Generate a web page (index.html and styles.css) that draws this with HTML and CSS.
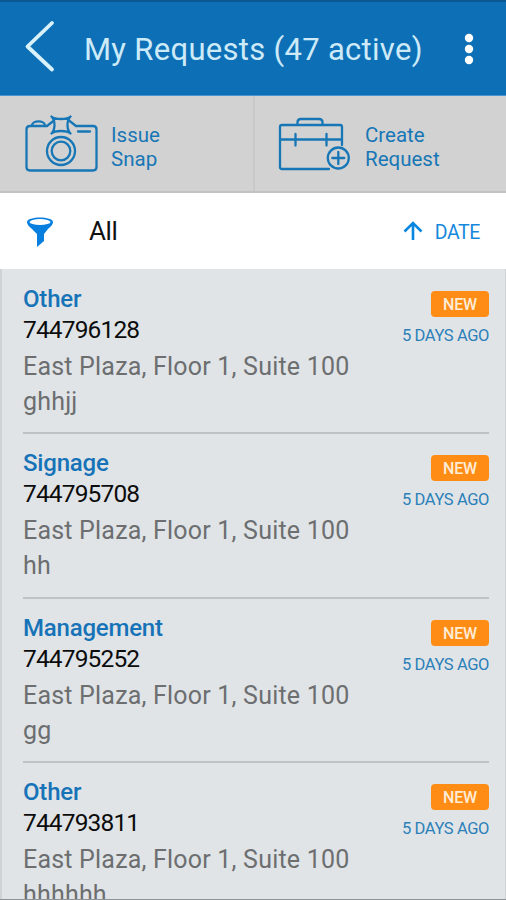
FILE: index.html
```
<!DOCTYPE html>
<html lang="en">
<head>
<meta charset="utf-8">
<title>My Requests</title>
<link rel="stylesheet" href="styles.css">
</head>
<body>
<div class="screen">
  <header class="bar">
    <svg class="back" width="34" height="54" viewBox="0 0 34 54"><path d="M30 4 5.500 27.500 30 50.500"/></svg>
    <h1>My Requests (47 active)</h1>
    <svg class="more" width="10" height="32" viewBox="0 0 10 32"><circle cx="5" cy="5" r="4.200"/><circle cx="5" cy="16" r="4.200"/><circle cx="5" cy="27" r="4.200"/></svg>
  </header>
  <nav class="actions">
    <a class="action">
      <svg width="76" height="60" viewBox="0 0 76 60">
        <path d="M31 5.500l-7 5.500H7q-3.500 0-3.500 3.500V52q0 3.500 3.500 3.500h63q3.500 0 3.500-3.500V14.500q0-3.500-3.500-3.500H53l-7-5.500"/>
        <path d="M9 10.500c0-5.500 13-5.500 13 0M55 16.500h12"/>
        <path d="M28.500 1.500q2.500 2.500 9.500 2.500t9.500-2.500q-3 3-3 8.500t3 8.500q-2.500-2.500-9.500-2.500t-9.500 2.500q3-3 3-8.500t-3-8.500Z"/>
        <circle cx="38" cy="36" r="14"/><circle cx="38" cy="36" r="9.300"/>
      </svg>
      <span class="label">Issue<br>Snap</span>
    </a>
    <a class="action create">
      <svg width="76" height="60" viewBox="0 0 76 60">
        <path d="M54 54H7q-2 0-2-2V12q0-2 2-2h58q2 0 2 2V30M5 24.500h62M20.500 19v11.500M51.500 19v11.500M22.500 9.500V7.500q0-3.500 3.500-3.500h18q3.500 0 3.500 3.500v2"/>
        <circle cx="63.300" cy="43" r="10.500"/><path d="M63.300 37v12M57.300 43h12"/>
      </svg>
      <span class="label">Create<br>Request</span>
    </a>
  </nav>
  <div class="filter">
    <svg class="funnel" width="28" height="32" viewBox="0 0 28 32"><path d="M1 6C1 0 27 0 27 6c0 3-3 5-5 7l-4 5v7l-7 6V18l-5-5C4 11 1 9 1 6Z"/><ellipse cx="14" cy="6" rx="10.500" ry="3"/></svg>
    <span class="all">All</span>
    <span class="sort"><svg width="20" height="20" viewBox="0 0 20 20"><path d="M10 19V2M1.500 10.500l8.500-8.500 8.500 8.500"/></svg><span class="date">DATE</span></span>
  </div>
  <main class="list">
    <article class="row">
      <div class="info"><h2>Other</h2><p class="num">744796128</p><p class="place">East Plaza, Floor 1, Suite 100</p><p class="place">ghhjj</p></div>
      <div class="meta"><span class="badge">NEW</span><span class="age">5 DAYS AGO</span></div>
    </article>
    <article class="row">
      <div class="info"><h2>Signage</h2><p class="num">744795708</p><p class="place">East Plaza, Floor 1, Suite 100</p><p class="place">hh</p></div>
      <div class="meta"><span class="badge">NEW</span><span class="age">5 DAYS AGO</span></div>
    </article>
    <article class="row">
      <div class="info"><h2>Management</h2><p class="num">744795252</p><p class="place">East Plaza, Floor 1, Suite 100</p><p class="place">gg</p></div>
      <div class="meta"><span class="badge">NEW</span><span class="age">5 DAYS AGO</span></div>
    </article>
    <article class="row">
      <div class="info"><h2>Other</h2><p class="num">744793811</p><p class="place">East Plaza, Floor 1, Suite 100</p><p class="place">hhhhhh</p></div>
      <div class="meta"><span class="badge">NEW</span><span class="age">5 DAYS AGO</span></div>
    </article>
  </main>
</div>
</body>
</html>
```
FILE: styles.css
```
* { box-sizing: border-box; }
body { margin: 0; font-family: Roboto, "Liberation Sans", sans-serif; }
h1, h2, p { margin: 0; font-weight: 400; white-space: nowrap; }
svg { flex: none; fill: none; stroke-linecap: round; stroke-linejoin: round; }
.screen { width: 506px; height: 900px; overflow: hidden; display: flex; flex-direction: column; border-bottom: 1px solid #8d9396; }
.bar { flex: none; height: 96px; display: flex; align-items: center; padding: 0 32px 0 22px; background: #0d70b6; border-top: 2px solid #0a5791; border-bottom: 1px solid #4a95d0; }
.back { stroke: #d9f1fa; stroke-width: 3.8; margin-top: -5px; }
.more { fill: #fff; margin-left: auto; margin-top: 1px; }
h1 { font-size: 31px; line-height: 40px; letter-spacing: .3px; color: #cdeaf8; margin-left: 28px; margin-top: 2px; }
.actions { flex: none; height: 97px; display: grid; grid-template-columns: 255px 251px; background: #d2d2d2; border-bottom: 2px solid #c2c2c2; }
.action { display: flex; padding: 19px 0 0 23px; gap: 12px; }
.action:first-child { border-right: 2px solid #c9c9c9; }
.action.create { padding-left: 21px; gap: 13px; }
.action svg { stroke: #1777b6; stroke-width: 2.3; }
.action.create svg { margin-left: -1px; margin-right: 1px; }
.label { font-size: 20.500px; line-height: 24px; color: #1777b6; padding-top: 8px; }
.filter { flex: none; height: 76px; display: flex; align-items: center; padding: 0 26px 0 26px; background: #fff; }
.funnel { margin-top: 1px; }
.funnel path { fill: #087fdf; }
.funnel ellipse { fill: #fff; }
.all { margin-left: 35px; font-size: 26px; line-height: 30px; letter-spacing: -.4px; color: #111; }
.sort { margin-left: auto; display: flex; align-items: center; gap: 12px; }
.sort svg { stroke: #0787df; stroke-width: 2.6; stroke-linecap: butt; stroke-linejoin: miter; }
.date { font-size: 19.500px; line-height: 24px; letter-spacing: -.4px; color: #1688dc; padding-top: 3px; }
.list { flex: 1; min-height: 0; overflow: hidden; background: #e0e4e7; border-left: 2px solid #cfd3d6; border-right: 1px solid #cfd3d6; padding: .5px 16px 0 21px; }
.row { height: 164.500px; padding-top: 14px; display: flex; justify-content: space-between; border-bottom: 2px solid #bec2c5; }
h2 { font-size: 24px; line-height: 30px; font-weight: 500; letter-spacing: -.2px; color: #1773b7; }
.num { font-size: 24.500px; line-height: 32px; color: #0c0c0c; letter-spacing: -.85px; margin-bottom: 3px; }
.place { font-size: 25px; line-height: 35px; letter-spacing: .2px; color: #6c6e70; }
.meta { display: flex; flex-direction: column; align-items: flex-end; padding-top: 7px; }
.badge { width: 58px; height: 26px; border-radius: 4px; background: #ff8c14; color: #fdecd6; font-size: 16px; line-height: 27px; font-weight: 500; text-align: center; letter-spacing: -.2px; }
.age { margin-top: 9px; font-size: 16.500px; line-height: 20px; letter-spacing: -.4px; color: #2b80b9; white-space: nowrap; }
```
